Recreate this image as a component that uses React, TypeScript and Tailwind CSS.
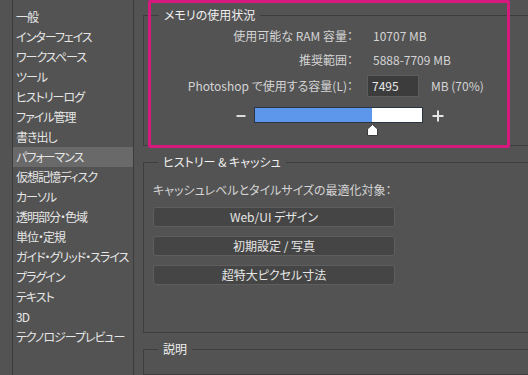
const sections = [
  '一般',
  'インターフェイス',
  'ワークスペース',
  'ツール',
  'ヒストリーログ',
  'ファイル管理',
  '書き出し',
  'パフォーマンス',
  '仮想記憶ディスク',
  'カーソル',
  '透明部分・色域',
  '単位・定規',
  'ガイド・グリッド・スライス',
  'プラグイン',
  'テキスト',
  '3D',
  'テクノロジープレビュー',
]

const presets = ['Web/UI デザイン', '初期設定 / 写真', '超特大ピクセル寸法']

export default function App() {
  const percent = 70

  return (
    <div className="relative flex h-[375px] w-[528px] overflow-hidden bg-[#535353] text-[12px] text-[#d4d4d4] [font-feature-settings:'palt'] font-['Noto_Sans_CJK_JP','Noto_Sans',sans-serif]">
      {/* Sidebar */}
      <div className="w-[134px] shrink-0 pl-[12px]">
        <ul className="h-full border-x border-[#3c3c3c] pt-[7px]">
          {sections.map((s) => (
            <li
              key={s}
              className={`h-[20px] whitespace-nowrap pl-[3px] leading-[20px] tracking-[-1px] text-[#e6e6e6] ${
                s === 'パフォーマンス' ? 'bg-[#696969]' : ''
              }`}
            >
              {s}
            </li>
          ))}
        </ul>
      </div>

      {/* Content */}
      <div className="flex w-[400px] shrink-0 flex-col pl-[9px]">
        {/* Memory usage */}
        <fieldset className="mt-[7px] border border-[#3e3e3e] pb-[8px]">
          <legend className="ml-[15px] px-[5px] leading-[16px] text-[#f0f0f0]">メモリの使用状況</legend>
          <div className="mt-[5px] flex h-[16px] items-center leading-4">
            <div className="w-[209px] text-right">使用可能な RAM 容量：</div>
            <div className="pl-[20px]">10707 MB</div>
          </div>
          <div className="mt-[8px] flex h-[16px] items-center leading-4">
            <div className="w-[209px] text-right">推奨範囲：</div>
            <div className="pl-[20px]">5888-7709 MB</div>
          </div>
          <div className="mt-[7px] flex items-center">
            <div className="w-[209px] whitespace-nowrap text-right">Photoshop で使用する容量(L)：</div>
            <div className="ml-[14px] flex h-[22px] w-[52px] items-center border border-[#5c5c5c] bg-[#3c3c3c] pl-[4px] text-[#e8e8e8]">
              7495
            </div>
            <div className="ml-[12px]">MB (70%)</div>
          </div>
          <div className="mt-[10px] flex items-start pl-[92px]">
            <svg width="10" height="16" viewBox="0 0 10 16" className="shrink-0">
              <rect x="0.5" y="8" width="9" height="2" fill="#dcdcdc" />
            </svg>
            <div className="relative ml-[8px] h-[16px] w-[169px] shrink-0 border border-[#2b3442] bg-white">
              <div className="h-full bg-[#5c97ec]" style={{ width: `${percent}%` }} />
              <svg
                width="11"
                height="12"
                viewBox="0 0 11 12"
                className="absolute top-[16px] left-[112px]"
              >
                <polygon points="5.5,0.5 10.5,5 10.5,11.5 0.5,11.5 0.5,5" fill="#ffffff" stroke="#3a3a3a" />
              </svg>
            </div>
            <svg width="12" height="16" viewBox="0 0 12 16" className="ml-[9px] shrink-0">
              <rect x="0.5" y="8" width="11" height="2" fill="#e6e6e6" />
              <rect x="5" y="3.5" width="2" height="11" fill="#e6e6e6" />
            </svg>
          </div>
          <div className="h-[14px]" />
        </fieldset>

        {/* History & cache */}
        <fieldset className="mt-[8px] border border-[#3e3e3e] pb-[47px]">
          <legend className="ml-[14px] px-[5px] leading-[16px] text-[#f0f0f0]">ヒストリー &amp; キャッシュ</legend>
          <div className="mt-[12px] pl-[9px] leading-4">キャッシュレベルとタイルサイズの最適化対象：</div>
          <div className="mt-[9px] flex flex-col gap-[9px] pl-[9px]">
            {presets.map((p) => (
              <button
                key={p}
                className="flex h-[20px] w-[242px] items-center justify-center rounded-[3px] border border-[#5e5e5e] bg-[#454545] text-[12px] text-[#e6e6e6]"
              >
                {p}
              </button>
            ))}
          </div>
        </fieldset>

        {/* Description */}
        <fieldset className="mt-[8px] h-[60px] border border-[#3e3e3e]">
          <legend className="ml-[14px] px-[5px] leading-[16px] text-[#f0f0f0]">説明</legend>
        </fieldset>
      </div>

      {/* Highlight annotation */}
      <div className="pointer-events-none absolute top-0 left-[148px] h-[148px] w-[362px] rounded-[2px] border-[3px] border-[#d6197f]" />
    </div>
  )
}
